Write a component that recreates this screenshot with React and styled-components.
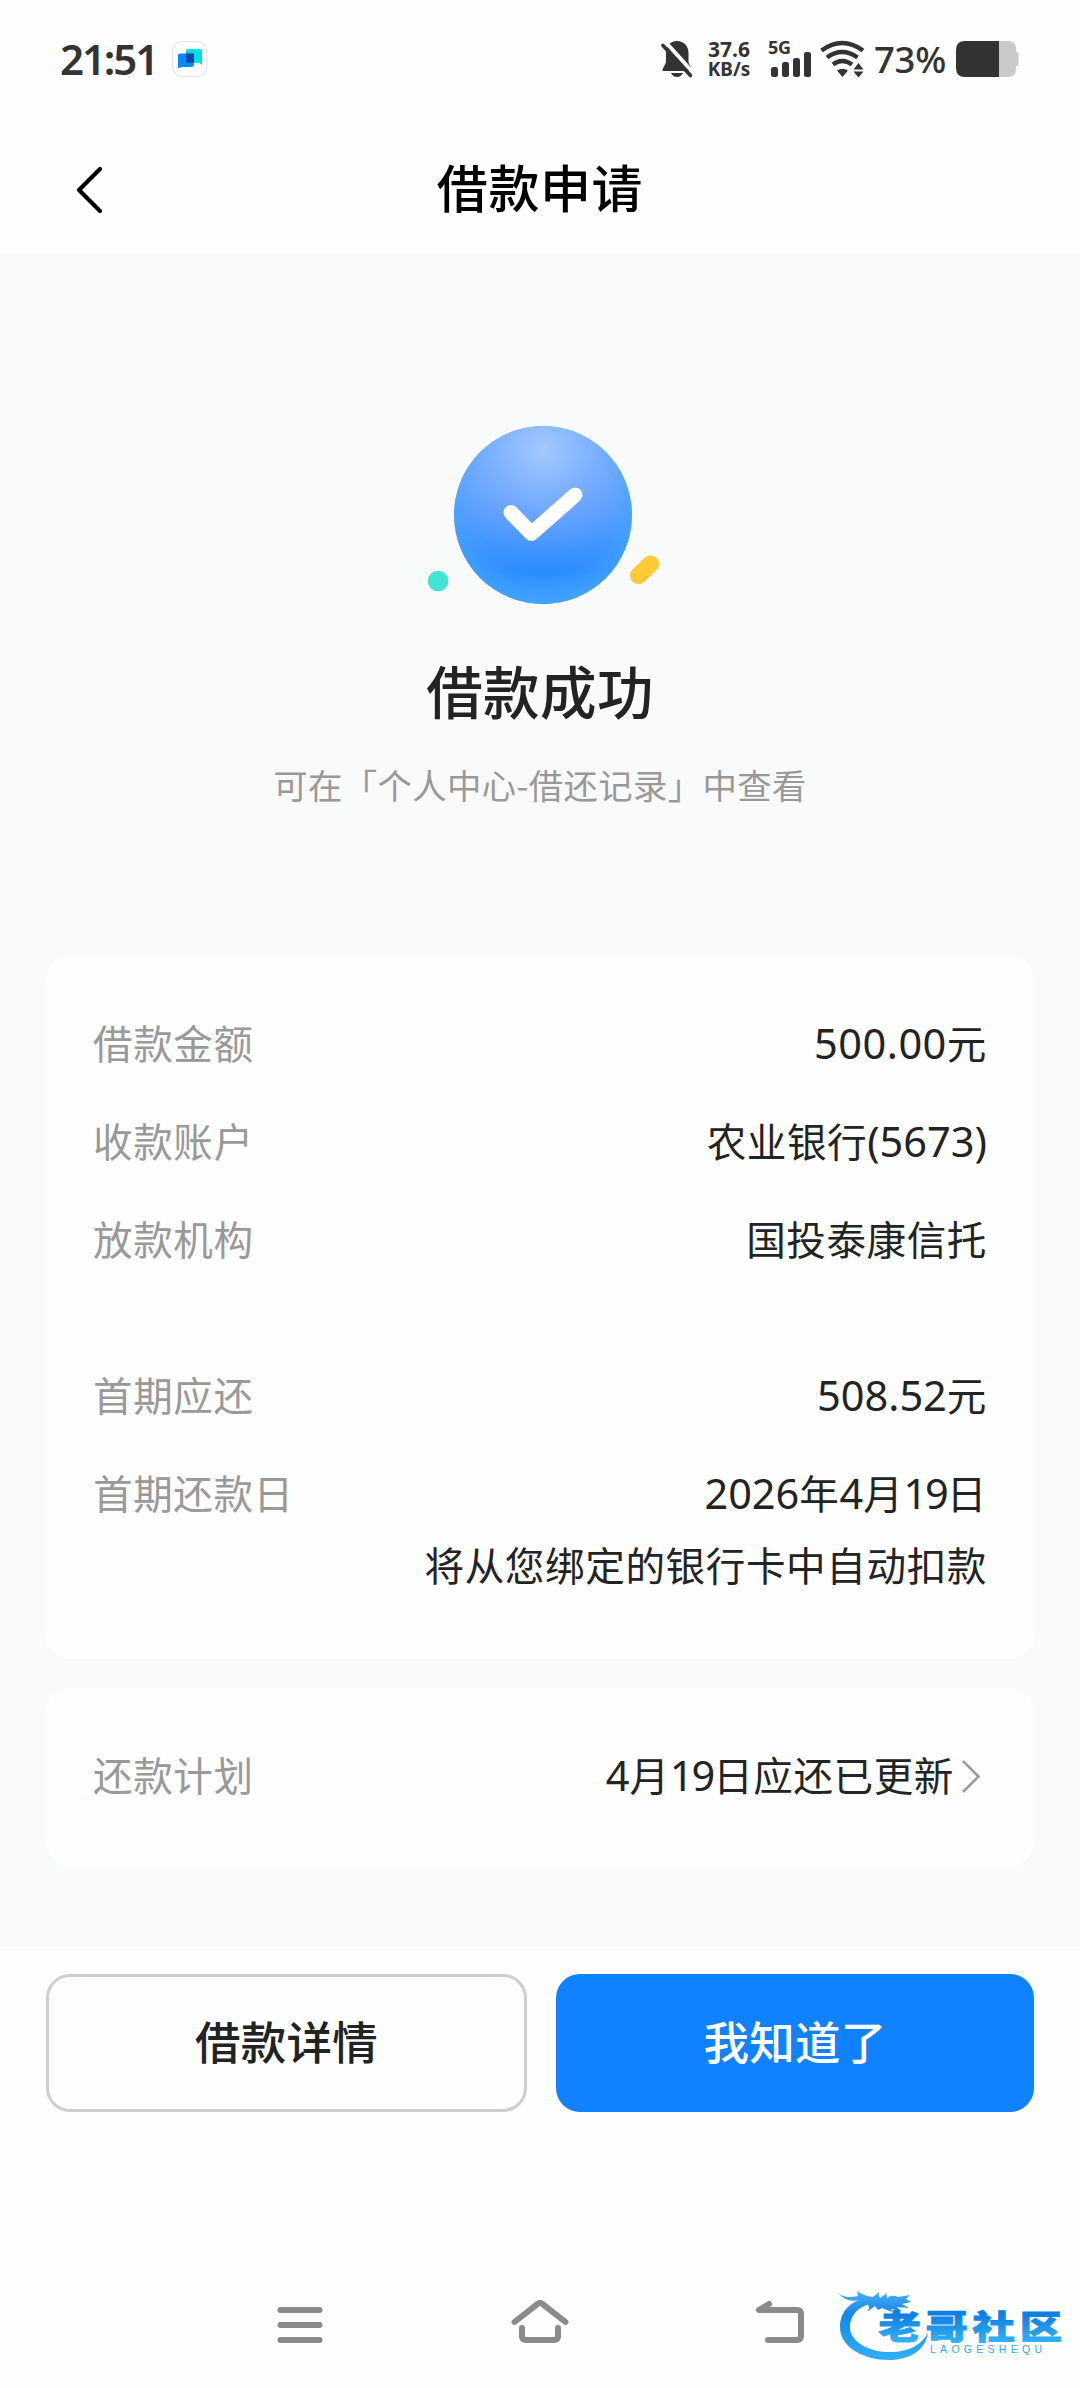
import React from "react";
import styled, { createGlobalStyle } from "styled-components";

const GlobalStyle = createGlobalStyle`
  * {
    box-sizing: border-box;
  }
  body {
    margin: 0;
    background: #fdfdfd;
  }
`;

const Page = styled("div")`
  position: relative;
  display: flex;
  flex-direction: column;
  width: 1080px;
  height: 2388px;
  overflow: hidden;
  background: #fefefe;
  color: #222324;
  font-family: "Noto Sans CJK SC", sans-serif;
`;

const StatusBar = styled("div")`
  display: flex;
  align-items: center;
  height: 117px;
  padding: 0 60px 0 60px;
  color: #333;
  font-family: "Noto Sans", sans-serif;
`;

const Time = styled("div")`
  width: 112px;
  font-size: 42px;
  font-weight: 600;
  line-height: 56px;
  letter-spacing: -2.1px;
  white-space: nowrap;
`;

const StatusRight = styled("div")`
  display: flex;
  align-items: center;
  margin-left: auto;
`;

const Speed = styled("div")`
  display: flex;
  flex-direction: column;
  width: 48px;
  margin: 0 16px 0 12px;
  font-size: 19.5px;
  font-weight: 700;
  line-height: 20px;
  text-align: center;
  white-space: nowrap;
`;

const Rate = styled("span")`
  font-size: ${(p) => p.$size}px;
`;

const Signal = styled("div")`
  display: flex;
  flex-direction: column;
  width: 42px;
  height: 37px;
  margin-right: 9px;
`;

const Network = styled("div")`
  height: 12px;
  margin-left: -1px;
  font-size: 18px;
  font-weight: 700;
  line-height: 15px;
  letter-spacing: -0.3px;
`;

const Bars = styled("div")`
  display: flex;
  align-items: flex-end;
  gap: 4px;
  height: 25px;
  padding-left: 2px;
`;

const Bar = styled("div")`
  width: 7px;
  height: ${(p) => p.$h}px;
  border-radius: 2.5px;
  background: #333;
`;

const Percent = styled("div")`
  width: 74px;
  margin: 0 8px 0 8px;
  font-size: 36.5px;
  font-weight: 500;
  line-height: 48px;
  letter-spacing: -0.3px;
  white-space: nowrap;
`;

const Header = styled("div")`
  display: grid;
  grid-template-columns: 140px 1fr 140px;
  align-items: center;
  height: 136px;
`;

const BackButton = styled("button")`
  display: flex;
  width: 40px;
  height: 56px;
  margin: 9px 0 0 70px;
  padding: 0;
  border: none;
  background: none;
`;

const Title = styled("h1")`
  margin: 2px 0 0;
  color: #000;
  font-size: 51px;
  font-weight: 500;
  line-height: 70px;
  letter-spacing: 0.6px;
  text-align: center;
`;

const Content = styled("div")`
  height: 1698px;
  padding: 167px 46px 0;
  background: #f9fbfb;
`;

const Hero = styled("div")`
  display: flex;
  flex-direction: column;
  align-items: center;
  height: 536px;

  svg {
    margin-left: 5px;
  }
`;

const HeroTitle = styled("h2")`
  margin: 19px 0 0;
  font-size: 56.5px;
  font-weight: 500;
  line-height: 80px;
  letter-spacing: 0.4px;
`;

const HeroText = styled("p")`
  margin: 30px 0 0;
  color: #999;
  font-size: 34.4px;
  line-height: 50px;
  letter-spacing: 0.35px;
  white-space: nowrap;
`;

const Card = styled("div")`
  display: flex;
  flex-direction: column;
  gap: 100px;
  height: ${(p) => p.$height}px;
  margin-bottom: 29px;
  padding: 58px 47px 0;
  border-radius: 24px;
  background: #fefefe;
`;

const Group = styled("div")`
  display: flex;
  flex-direction: column;
  gap: 42px;
`;

const Row = styled("div")`
  display: flex;
  justify-content: space-between;
  height: 56px;
  font-size: 39.6px;
  line-height: 56px;
  letter-spacing: 0.55px;
  white-space: nowrap;
`;

const Label = styled("span")`
  color: #999;
`;

const Value = styled("span")`
  display: flex;
  align-items: baseline;
`;

const Num = styled("span")`
  font-family: "Noto Sans", sans-serif;
  font-size: 41.5px;
  line-height: 1;
  letter-spacing: ${(p) => p.$track || 0}px;
`;

const Arrow = styled("svg")`
  align-self: center;
  margin-left: -1px;
`;

const Note = styled("div")`
  margin-top: -26px;
  font-size: 39.6px;
  line-height: 56px;
  letter-spacing: 0.6px;
  text-align: right;
`;

const Actions = styled("div")`
  display: flex;
  gap: 29px;
  height: 304px;
  padding: 23px 46px 0;
`;

const Button = styled("button")`
  width: ${(p) => (p.$primary ? 478 : 481)}px;
  height: 138px;
  padding: 0 0 6px;
  border: ${(p) => (p.$primary ? "none" : "3px solid #cbcfd4")};
  border-radius: 24px;
  background: ${(p) => (p.$primary ? "#1082ff" : "#fefefe")};
  color: ${(p) => (p.$primary ? "#fff" : "#222324")};
  font-family: inherit;
  font-size: 45.5px;
  font-weight: 500;
  letter-spacing: 0.3px;
`;

const NavBar = styled("div")`
  display: flex;
  gap: 180px;
  height: 133px;
  padding: 35px 0 0 270px;
`;

const Watermark = styled("svg")`
  position: absolute;
  left: 830px;
  top: 2280px;
`;

const AppBadge = () => (
  <svg width="36" height="38" viewBox="0 0 36 38">
    <rect x="0.7" y="1.7" width="34" height="34.6" rx="9" fill="#fff" stroke="#e3e5e6" strokeWidth="1.2" />
    <path d="M16 9h12q2 0 2 2v14q-2-2-4-2H14V11q0-2 2-2z" fill="#00dfe3" />
    <path d="M8 13.500h14V24q0 3-3 3h-9q-2 0-4 1.500V15.500q0-2 2-2z" fill="#058bff" />
    <path d="M14 13.500h8V23h-6q-2 0-2-2z" fill="#0448a8" />
  </svg>
);

const BellOff = () => (
  <svg width="32" height="38" viewBox="0 0 32 38">
    <path
      d="M16 1C23 1 27.500 6 27.500 13v8c0 4 3.500 6 3.500 10H1.500c0-4 3.500-6 3.500-10v-8C5 6 9 1 16 1z"
      fill="#333"
    />
    <path d="M10 33h12q-2 4-6 4t-6-4z" fill="#333" />
    <path d="M4 1.500l28 31" stroke="#fefefe" strokeWidth="4" />
    <path d="M0 0h7L4 7H0z" fill="#fefefe" />
    <path d="M2 5.500l27.500 30" stroke="#333" strokeWidth="3.600" strokeLinecap="round" />
  </svg>
);

const Wifi = () => (
  <svg width="46" height="38" viewBox="0 0 46 38">
    <g fill="none" stroke="#333" strokeWidth="4.500">
      <path d="M1.500 10.500Q22 -4.500 43 10.500" />
      <path d="M7 17.500Q22 6.500 37.500 17.500" />
      <path d="M13 24.500Q22 17.500 32 24.500" />
    </g>
    <path d="M17 30.500q5.500-3.500 11 0L22.500 37z" fill="#333" />
    <path d="M38.500 23l5 6.500h-10zM38.500 37.500l5-6h-10z" fill="#333" />
  </svg>
);

const Battery = () => (
  <svg width="64" height="36" viewBox="0 0 64 36">
    <path d="M43 0h9q8 0 8 8v3h1.500q1 0 1 2v10q0 2-1 2H60v3q0 8-8 8h-9z" fill="#cacaca" />
    <path d="M9 0h34v36H9q-9 0-9-9V9q0-9 9-9z" fill="#333" />
  </svg>
);

const SuccessIcon = () => (
  <svg width="290" height="210" viewBox="0 0 290 210">
    <defs>
      <linearGradient id="ball" x1="0" y1="0" x2="0" y2="1">
        <stop offset="0" stopColor="#7db2ff" />
        <stop offset="0.500" stopColor="#559cff" />
        <stop offset="0.820" stopColor="#2c8dff" />
        <stop offset="1" stopColor="#3a9aff" />
      </linearGradient>
      <radialGradient id="shine" cx="0.500" cy="0.140" r="0.600">
        <stop offset="0" stopColor="#a4caff" />
        <stop offset="0.500" stopColor="#85b4ff" stopOpacity="0.600" />
        <stop offset="1" stopColor="#6ba2ff" stopOpacity="0" />
      </radialGradient>
      <radialGradient id="edge" cx="0.500" cy="0.450" r="0.560">
        <stop offset="0.700" stopColor="#43a2ff" stopOpacity="0" />
        <stop offset="1" stopColor="#43a6ff" stopOpacity="0.800" />
      </radialGradient>
    </defs>
    <circle cx="145" cy="95" r="89" fill="url(#ball)" />
    <circle cx="145" cy="95" r="89" fill="url(#edge)" />
    <circle cx="145" cy="95" r="89" fill="url(#shine)" />
    <path
      d="M113 92.500L133.500 113.500L177 75"
      fill="none"
      stroke="#fff"
      strokeWidth="15"
      strokeLinecap="round"
      strokeLinejoin="round"
    />
    <circle cx="40" cy="161" r="10.300" fill="#40e5d6" />
    <path d="M240.500 155.500L252.500 144" stroke="#ffc937" strokeWidth="17" strokeLinecap="round" />
  </svg>
);

const MenuIcon = () => (
  <svg width="60" height="60" viewBox="0 0 60 60">
    <path d="M10.500 20h39M10.500 35h39M10.500 50h39" stroke="#8a8a8a" strokeWidth="6" strokeLinecap="round" />
  </svg>
);

const HomeIcon = () => (
  <svg width="60" height="60" viewBox="0 0 60 60">
    <g fill="none" stroke="#8a8a8a" strokeWidth="6" strokeLinecap="round" strokeLinejoin="round">
      <path d="M4.500 32L28 13.600Q30 12 32 13.600L55.500 32" />
      <path d="M12 38v8q0 4 4 4h28q4 0 4-4v-8" />
    </g>
  </svg>
);

const ReturnIcon = () => (
  <svg width="60" height="60" viewBox="0 0 60 60">
    <g fill="none" stroke="#8a8a8a" strokeWidth="6" strokeLinecap="round" strokeLinejoin="round">
      <path d="M19 14L9 20h38q4 0 4 4v22q0 4-4 4H18" />
    </g>
  </svg>
);

const CommunityMark = () => (
  <Watermark width="240" height="86" viewBox="0 0 240 86">
    <defs>
      <linearGradient id="mark" gradientUnits="userSpaceOnUse" x1="0" y1="10" x2="0" y2="80">
        <stop offset="0" stopColor="#4fb0f5" />
        <stop offset="0.350" stopColor="#1287e8" />
        <stop offset="1" stopColor="#31b0f6" />
      </linearGradient>
      <linearGradient id="markText" x1="0" y1="0" x2="0" y2="1">
        <stop offset="0.300" stopColor="#0f7fe2" />
        <stop offset="0.900" stopColor="#36b4f6" />
      </linearGradient>
    </defs>
    <g fill="url(#mark)">
      <path d="M42 18C22 18 10 31 10 47C10 67 33 80 59 80C79 80 95 71 98 53C91 65 80 71 63 72C42 73 22 64 20 49C19 37 27 27 40 24z" />
      <path d="M8 13Q15 19 28 16L27 11Q34 16 43 17L49 12Q48 15 50 18L57 13Q56 15 57 18Q62 14 68 17L80 15L76 19L81 22L72 24L79 28L67 27L71 31L61 29L62 32L52 28L48 30L45 26L38 31Q41 25 35 23L27 26L30 20Q16 23 8 13z" />
    </g>
    <text
      transform="translate(48.500 59) scale(1.300 1)"
      fill="url(#markText)"
      stroke="url(#markText)"
      strokeWidth="0.900"
      fontFamily="Noto Sans CJK SC, sans-serif"
      fontSize="32.500"
      fontWeight="900"
      letterSpacing="3.700"
    >
      老哥社区
    </text>
    <text
      x="100"
      y="72.500"
      fill="#35a8ee"
      fontFamily="Liberation Sans, sans-serif"
      fontSize="10.500"
      textLength="112"
    >
      LAOGESHEQU
    </text>
  </Watermark>
);

const App = () => {
  return (
    <Page>
      <GlobalStyle />
      <StatusBar>
        <Time>21:51</Time>
        <AppBadge />
        <StatusRight>
          <BellOff />
          <Speed>
            <Rate $size={21}>37.6</Rate>
            <Rate $size={19}>KB/s</Rate>
          </Speed>
          <Signal>
            <Network>5G</Network>
            <Bars>
              <Bar $h={10} />
              <Bar $h={15} />
              <Bar $h={19} />
              <Bar $h={25} />
            </Bars>
          </Signal>
          <Wifi />
          <Percent>73%</Percent>
          <Battery />
        </StatusRight>
      </StatusBar>

      <Header>
        <BackButton aria-label="返回">
          <svg width="40" height="56" viewBox="0 0 40 56">
            <path
              d="M30 7L9 28L30 49"
              fill="none"
              stroke="#000"
              strokeWidth="4.200"
              strokeLinecap="round"
              strokeLinejoin="round"
            />
          </svg>
        </BackButton>
        <Title>借款申请</Title>
      </Header>

      <Content>
        <Hero>
          <SuccessIcon />
          <HeroTitle>借款成功</HeroTitle>
          <HeroText>可在「个人中心-借还记录」中查看</HeroText>
        </Hero>

        <Card $height={703}>
          <Group>
            <Row>
              <Label>借款金额</Label>
              <Value>
                <Num $track={0.5}>500.00</Num>元
              </Value>
            </Row>
            <Row>
              <Label>收款账户</Label>
              <Value>
                农业银行<Num>(5673)</Num>
              </Value>
            </Row>
            <Row>
              <Label>放款机构</Label>
              <Value>国投泰康信托</Value>
            </Row>
          </Group>
          <Group>
            <Row>
              <Label>首期应还</Label>
              <Value>
                <Num>508.52</Num>元
              </Value>
            </Row>
            <Row>
              <Label>首期还款日</Label>
              <Value>
                <Num>2026</Num>年<Num>4</Num>月<Num $track={-2}>19</Num>日
              </Value>
            </Row>
            <Note>将从您绑定的银行卡中自动扣款</Note>
          </Group>
        </Card>

        <Card $height={178}>
          <Row>
            <Label>还款计划</Label>
            <Value>
              <Num>4</Num>月<Num $track={-2}>19</Num>日应还已更新
              <Arrow width="34" height="40" viewBox="0 0 34 40">
                <path d="M10 7L25.500 22.500L10 38" fill="none" stroke="#999b9e" strokeWidth="2.600" />
              </Arrow>
            </Value>
          </Row>
        </Card>
      </Content>

      <Actions>
        <Button>借款详情</Button>
        <Button $primary>我知道了</Button>
      </Actions>

      <NavBar>
        <MenuIcon />
        <HomeIcon />
        <ReturnIcon />
      </NavBar>
      <CommunityMark />
    </Page>
  );
};

export default App;
